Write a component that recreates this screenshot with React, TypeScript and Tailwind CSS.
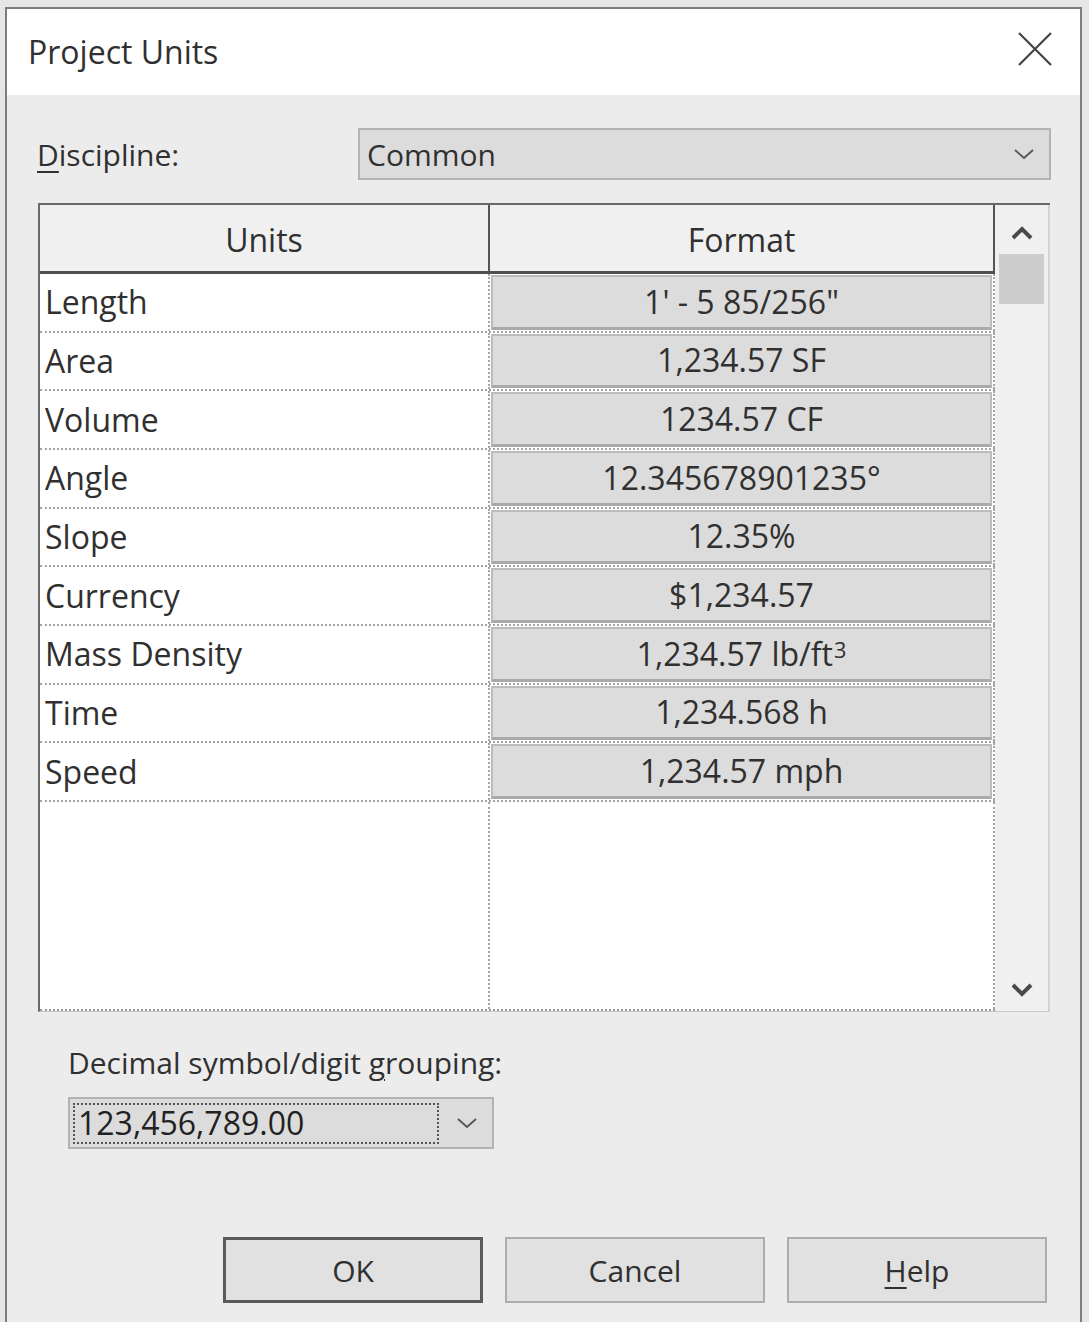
import React from "react";

const rows: [string, React.ReactNode][] = [
  ["Length", `1' - 5 85/256"`],
  ["Area", "1,234.57 SF"],
  ["Volume", "1234.57 CF"],
  ["Angle", "12.345678901235°"],
  ["Slope", "12.35%"],
  ["Currency", "$1,234.57"],
  [
    "Mass Density",
    <>
      1,234.57 lb/ft<sup className="text-[68%] relative -top-[4px] ml-[1px]">3</sup>
    </>,
  ],
  ["Time", "1,234.568 h"],
  ["Speed", "1,234.57 mph"],
];

function Chevron({ up = false, className = "" }: { up?: boolean; className?: string }) {
  return (
    <svg width="24" height="16" viewBox="0 0 24 16" className={className}>
      <path
        d={up ? "M3 13 L12 4 L21 13" : "M3 3 L12 12 L21 3"}
        fill="none"
        stroke="#4a4a4a"
        strokeWidth="4"
      />
    </svg>
  );
}

function ComboArrow() {
  return (
    <svg width="22" height="12" viewBox="0 0 22 12">
      <path d="M2 2 L11 10 L20 2" fill="none" stroke="#555" strokeWidth="1.8" />
    </svg>
  );
}

function Button({ label, isDefault = false }: { label: React.ReactNode; isDefault?: boolean }) {
  return (
    <button
      className={
        "w-[260px] h-[66px] bg-[#e1e1e1] text-[30px] text-[#303030] flex items-center justify-center " +
        (isDefault ? "border-[3px] border-[#5a5a5a]" : "border-2 border-[#adadad]")
      }
    >
      {label}
    </button>
  );
}

export default function App() {
  return (
    <div
      className="min-h-[1322px] bg-[#e6e6e6] pl-[5px] pt-[7px] pr-[7px] overflow-hidden"
      style={{ fontFamily: '"Open Sans", "Noto Sans", sans-serif' }}
    >
      <div className="h-[1320px] border-2 border-b-0 border-[#7d7d7d] bg-[#ececec] text-[#303030]">
        {/* title bar */}
        <div className="h-[86px] bg-white flex items-center justify-between pl-[21px] pr-[28px]">
          <span className="text-[32px] leading-none -mt-[1px]">Project Units</span>
          <svg width="34" height="34" viewBox="0 0 34 34" className="-mt-[6px]">
            <path d="M1 1 L33 33 M33 1 L1 33" stroke="#444" strokeWidth="2.2" />
          </svg>
        </div>

        {/* discipline */}
        <div className="flex items-center mt-[33px] pl-[30px] pr-[29px]">
          <span className="w-[321px] text-[30px]">
            <span className="underline underline-offset-[5px] decoration-2">D</span>iscipline:
          </span>
          <div className="flex-1 h-[52px] bg-[#dcdcdc] border-2 border-[#b3b3b3] flex items-center justify-between pl-[7px] pr-[14px]">
            <span className="text-[30px]">Common</span>
            <ComboArrow />
          </div>
        </div>

        {/* table */}
        <div className="ml-[31px] mt-[23px] w-[1012px] h-[809px] flex border-t-2 border-l-2 border-[#6a6a6a] border-b border-b-[#c8c8c8]">
          <div className="w-[955px] flex flex-col bg-white border-b-2 border-dotted border-[#9a9a9a]">
            <div className="h-[69px] flex bg-[#f0f0f0] border-b-[3px] border-[#4f4f4f]">
              <div className="w-[450px] flex items-center justify-center pt-[4px] text-[32px] border-r-2 border-[#555]">
                Units
              </div>
              <div className="flex-1 flex items-center justify-center pt-[4px] text-[32px] border-r-2 border-[#555]">
                Format
              </div>
            </div>
            {rows.map(([unit, fmt]) => (
              <div key={unit} className="h-[58.67px] flex border-b-2 border-dotted border-[#a5a5a5]">
                <div className="w-[450px] flex items-center pl-[5px] text-[32px] border-r-2 border-dotted border-[#a5a5a5]">
                  {unit}
                </div>
                <div className="flex-1 border-r-2 border-dotted border-[#a5a5a5] p-[1px]">
                  <div className="h-full bg-[#dcdcdc] border-2 border-[#bcbcbc] border-b-[3px] border-b-[#a9a9a9] flex items-center justify-center text-[32px]">
                    {fmt}
                  </div>
                </div>
              </div>
            ))}
            <div className="flex-1 flex">
              <div className="w-[450px] border-r-2 border-dotted border-[#a5a5a5]" />
              <div className="flex-1 border-r-2 border-dotted border-[#a5a5a5]" />
            </div>
          </div>
          {/* scrollbar */}
          <div className="flex-1 bg-[#f0f0f0] border-r-2 border-[#d4d4d4] flex flex-col items-center">
            <Chevron up className="mt-[20px]" />
            <div className="mt-[13px] w-[45px] h-[50px] bg-[#cdcdcd]" />
            <div className="flex-1" />
            <Chevron className="mb-[13px]" />
          </div>
        </div>

        {/* decimal grouping */}
        <div className="ml-[61px] mt-[36px]">
          <div className="text-[30px] leading-none">
            Decimal symbol/digit <span className="underline underline-offset-[5px] decoration-2">g</span>rouping:
          </div>
          <div className="mt-[19px] w-[426px] h-[52px] bg-[#dcdcdc] border-2 border-[#b3b3b3] flex items-center pl-[3px] pr-[14px]">
            <div className="w-[366px] h-[41px] border-2 border-dotted border-[#555] flex items-center pl-[3px] text-[32px] text-[#222]">
              123,456,789.00
            </div>
            <div className="flex-1 flex justify-end">
              <ComboArrow />
            </div>
          </div>
        </div>

        {/* buttons */}
        <div className="flex justify-end gap-[22px] pr-[33px] mt-[88px]">
          <Button label="OK" isDefault />
          <Button label="Cancel" />
          <Button
            label={
              <>
                <span className="underline underline-offset-[5px] decoration-2">H</span>elp
              </>
            }
          />
        </div>
      </div>
    </div>
  );
}
